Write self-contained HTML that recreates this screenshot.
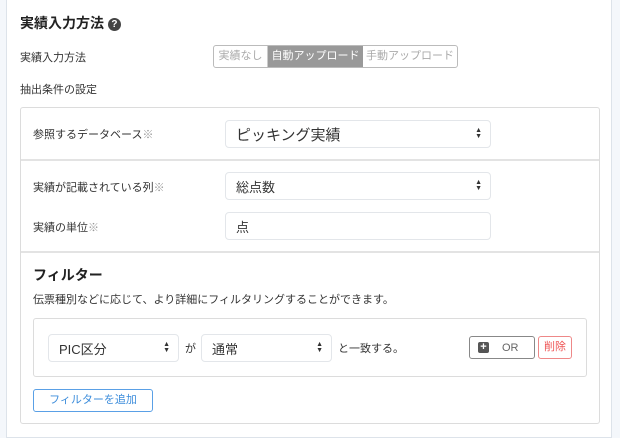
<!DOCTYPE html>
<html><head><meta charset="utf-8"><style>
*{box-sizing:border-box;margin:0;padding:0}
body{width:620px;height:433px;background:#f4f7fb;font-family:"Liberation Sans","Noto Sans CJK JP",sans-serif;color:#333;position:relative;overflow:hidden}
.card{position:absolute;left:6px;top:-2px;width:606px;height:440px;background:#fff;border:1px solid #dde3ea}
.a{position:absolute;white-space:nowrap}
.sel{position:absolute;background:#fff;border:1px solid #e3e6ea;border-radius:4px;font-size:13px;display:flex;align-items:center;padding-left:10px}
.sel .ar{position:absolute;right:8px;top:50%;transform:translateY(-50%);font-size:7px;line-height:6px;color:#333}
.g{color:#999}
</style></head><body>
<div class="card"></div>
<div class="a" style="left:20px;top:13px;font-size:14px;font-weight:bold;color:#222">実績入力方法 <span style="display:inline-block;width:13px;height:13px;border-radius:50%;background:#444;color:#fff;font-size:10px;text-align:center;line-height:13px;vertical-align:1px">?</span></div>
<div class="a" style="left:20px;top:49px;font-size:11px">実績入力方法</div>
<div class="a" style="left:213px;top:45px;width:245px;height:23px;border:1px solid #bbb;border-radius:3px;display:flex;font-size:11px;overflow:hidden">
<div style="width:54px;color:#aaa;text-align:center;line-height:21px;border-right:1px solid #ccc">実績なし</div>
<div style="width:95px;background:#999;color:#fff;text-align:center;line-height:21px">自動アップロード</div>
<div style="flex:1;color:#aaa;text-align:center;line-height:21px">手動アップロード</div></div>
<div class="a" style="left:20px;top:81px;font-size:11px">抽出条件の設定</div>
<div class="a" style="left:20px;top:107px;width:580px;height:317px;border:1px solid #dcdcdc;border-radius:3px"></div>
<div class="a" style="left:21px;top:159px;width:578px;height:2px;background:#e3e3e3"></div>
<div class="a" style="left:21px;top:251px;width:578px;height:2px;background:#e3e3e3"></div>
<div class="a" style="left:33px;top:126px;font-size:11px">参照するデータベース<span class="g">※</span></div>
<div class="sel" style="left:225px;top:120px;width:266px;height:28px;font-size:15px">ピッキング実績<span class="ar">▲<br>▼</span></div>
<div class="a" style="left:33px;top:179px;font-size:11px">実績が記載されている列<span class="g">※</span></div>
<div class="sel" style="left:225px;top:172px;width:266px;height:28px">総点数<span class="ar">▲<br>▼</span></div>
<div class="a" style="left:33px;top:219px;font-size:11px">実績の単位<span class="g">※</span></div>
<div class="sel" style="left:225px;top:212px;width:266px;height:28px">点</div>
<div class="a" style="left:33px;top:265px;font-size:14px;font-weight:bold;color:#222">フィルター</div>
<div class="a" style="left:33px;top:291px;font-size:11px">伝票種別などに応じて、より詳細にフィルタリングすることができます。</div>
<div class="a" style="left:33px;top:318px;width:554px;height:59px;border:1px solid #dcdcdc;border-radius:3px"></div>
<div class="sel" style="left:48px;top:334px;width:131px;height:28px">PIC区分<span class="ar">▲<br>▼</span></div>
<div class="a" style="left:185px;top:340px;font-size:11px">が</div>
<div class="sel" style="left:201px;top:334px;width:131px;height:28px">通常<span class="ar">▲<br>▼</span></div>
<div class="a" style="left:338px;top:340px;font-size:11px">と一致する。</div>
<div class="a" style="left:469px;top:336px;width:66px;height:23px;border:1px solid #888;border-radius:3px;font-size:11px;color:#666"><span style="position:absolute;left:8px;top:5px;width:11px;height:11px;background:#555;border-radius:2px;color:#fff;font-size:11px;line-height:10px;text-align:center;font-weight:bold">+</span><span style="position:absolute;left:32px;top:5px">OR</span></div>
<div class="a" style="left:538px;top:336px;width:34px;height:23px;border:1px solid #e88;border-radius:3px;font-size:11px;color:#e55;text-align:center;line-height:21px">削除</div>
<div class="a" style="left:33px;top:389px;width:120px;height:23px;border:1px solid #5aa0e6;border-radius:3px;font-size:11px;color:#3d8ddb;text-align:center;line-height:21px">フィルターを追加</div>
</body></html>
